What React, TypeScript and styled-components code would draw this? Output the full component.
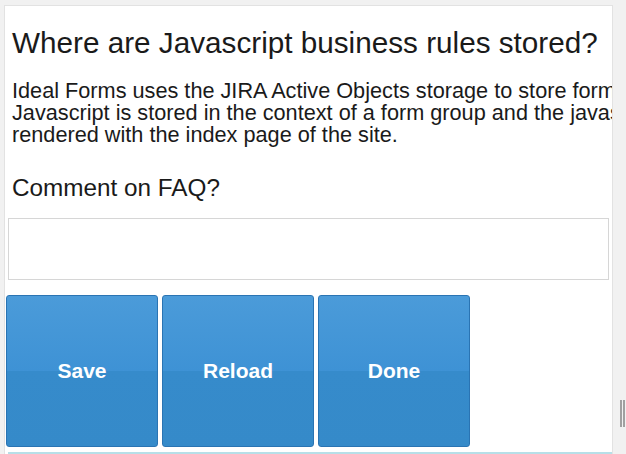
import React from "react";
import styled, { createGlobalStyle } from "styled-components";

const GlobalStyle = createGlobalStyle`
  html, body {
    margin: 0;
    padding: 0;
    height: 100%;
    overflow: hidden;
    background: #f1f1f1;
    font-family: "Liberation Sans", Arial, sans-serif;
  }
  #root {
    height: 100%;
  }
`;

const Page = styled.div`
  display: flex;
  height: 100%;
  padding: 5px 0 0 4px;
  box-sizing: border-box;
`;

const Panel = styled.div`
  width: 609px;
  flex: none;
  background: #ffffff;
  border: 1px solid #e2e2e2;
  border-bottom: none;
  box-sizing: border-box;
  overflow: hidden;
  display: flex;
  flex-direction: column;
`;

const Content = styled.div`
  padding: 20px 0 0 7px;
  white-space: nowrap;
`;

const Question = styled.h2`
  margin: 0 0 20px;
  font-size: 29.7px;
  line-height: 34px;
  font-weight: normal;
  color: #1a1a1a;
`;

const Answer = styled.p`
  margin: 0;
  font-size: 21.7px;
  line-height: 22px;
  color: #1a1a1a;
`;

const CommentLabel = styled.label`
  display: block;
  margin-top: 28px;
  font-size: 24.3px;
  line-height: 28px;
  color: #1a1a1a;
`;

const CommentBox = styled.textarea`
  display: block;
  width: 601px;
  height: 62px;
  margin: 16px 0 0 -4px;
  border: 1px solid #d6d6d6;
  box-sizing: border-box;
  resize: none;
  outline: none;
  font-family: inherit;
  font-size: 16px;
`;

const ButtonRow = styled.div`
  display: flex;
  gap: 4px;
  margin: 15px 0 0 1px;
`;

const ActionButton = styled.button`
  width: 152px;
  height: 152px;
  border: 1px solid #2a74b3;
  border-radius: 3px;
  background: linear-gradient(
    to bottom,
    #4b9bd9 0%,
    #3e92d5 50%,
    #368bcb 50%,
    #358ac9 100%
  );
  color: #ffffff;
  font-family: "Liberation Sans", Arial, sans-serif;
  font-size: 21px;
  font-weight: bold;
  cursor: pointer;
  padding: 0;
`;

const NextRow = styled.div`
  margin: 5px 0 0 3px;
  border-top: 2px solid #b7dfe8;
`;

const SideStrip = styled.div`
  flex: 1;
  display: flex;
  align-items: flex-end;
  justify-content: flex-end;
  padding-bottom: 27px;
`;

const Grip = styled.div`
  width: 5px;
  height: 27px;
  border-left: 2px solid #a0a0a0;
  border-right: 2px solid #a0a0a0;
  box-sizing: border-box;
  margin-right: 1px;
`;

export default function App() {
  return (
    <>
      <GlobalStyle />
      <Page>
        <Panel>
          <Content>
            <Question>Where are Javascript business rules stored?</Question>
            <Answer>
              Ideal Forms uses the JIRA Active Objects storage to store form
              <br />
              Javascript is stored in the context of a form group and the javascript is
              <br />
              rendered with the index page of the site.
            </Answer>
            <CommentLabel>Comment on FAQ?</CommentLabel>
            <CommentBox />
          </Content>
          <ButtonRow>
            <ActionButton>Save</ActionButton>
            <ActionButton>Reload</ActionButton>
            <ActionButton>Done</ActionButton>
          </ButtonRow>
          <NextRow />
        </Panel>
        <SideStrip>
          <Grip />
        </SideStrip>
      </Page>
    </>
  );
}
